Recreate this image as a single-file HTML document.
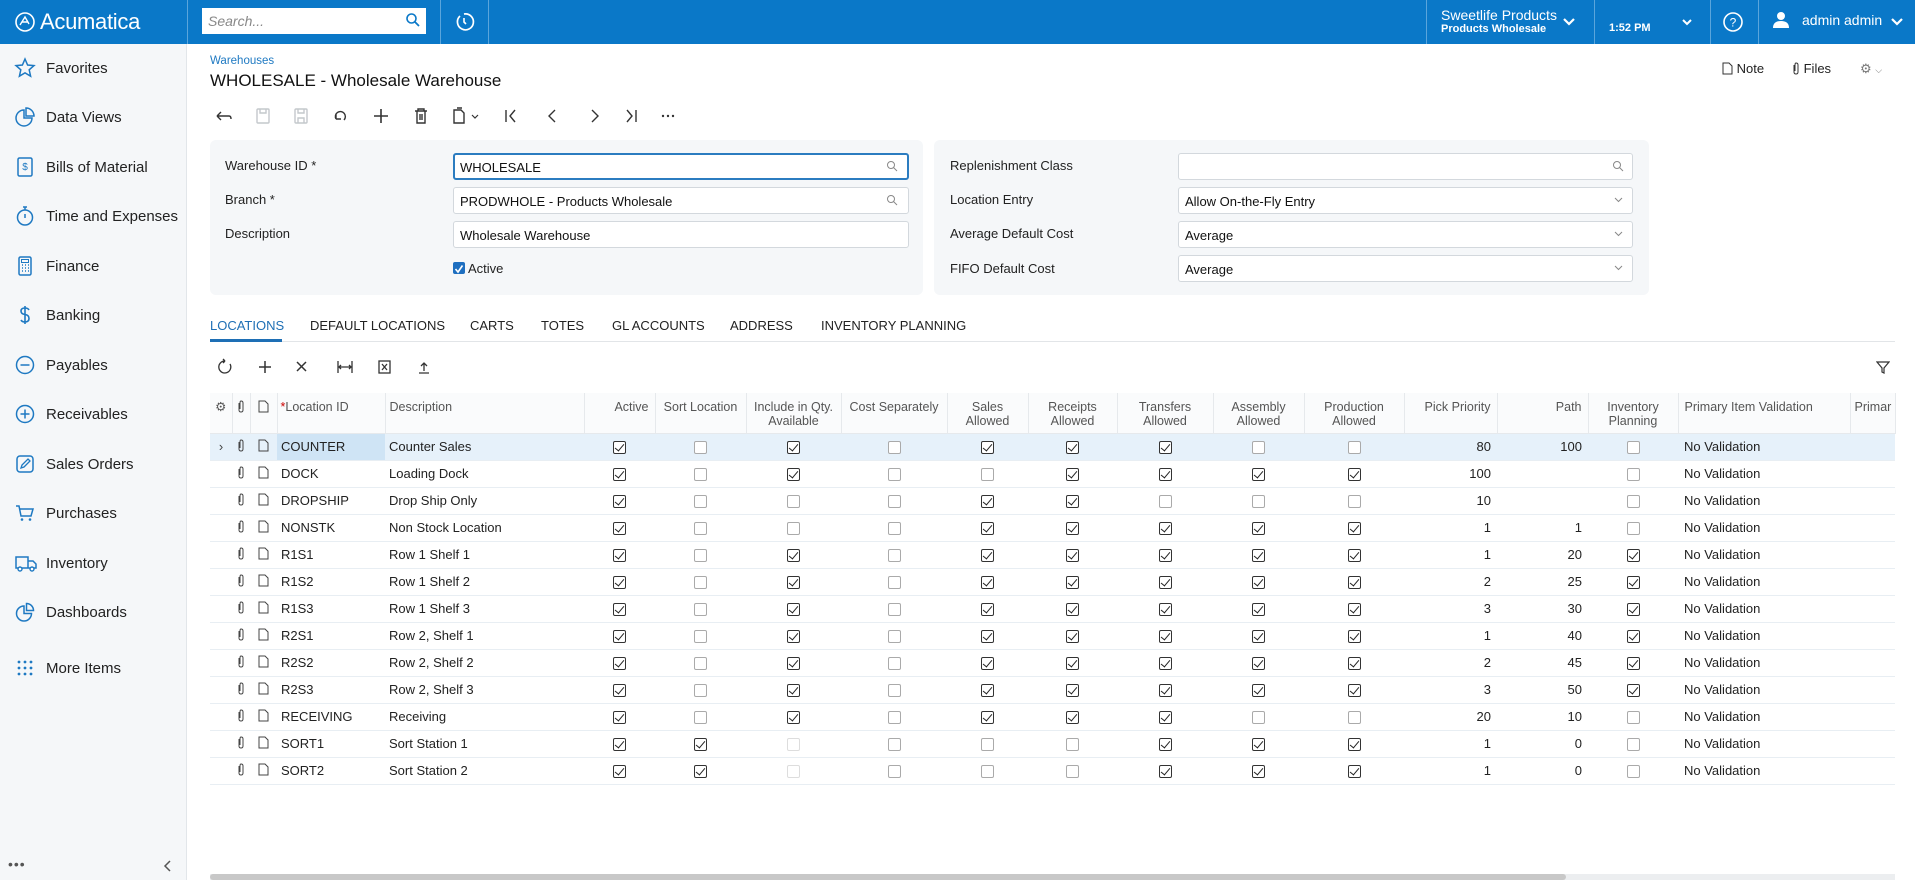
<!DOCTYPE html>
<html><head><meta charset="utf-8">
<style>
*{box-sizing:border-box;margin:0;padding:0}
body{width:1915px;height:880px;overflow:hidden;font-family:"Liberation Sans",Arial,sans-serif;background:#fff;position:relative;color:#222}
.abs{position:absolute}
#top{left:0;top:0;width:1915px;height:44px;background:#0a78c8;color:#fff}
.vd{position:absolute;top:0;width:1px;height:44px;background:#5aa5dc}
#side{left:0;top:44px;width:187px;height:836px;background:#f5f7f9;border-right:1px solid #e2e6ea}
.si{position:absolute;left:0;height:30px;width:187px;font-size:15px;color:#222;display:flex;align-items:center}
.si svg{position:absolute;left:14px}
.si span{position:absolute;left:46px}
.lbl{position:absolute;font-size:13px;color:#222}
.inp{position:absolute;height:27px;background:#fff;border:1px solid #d3d8dd;border-radius:3px;font-size:13px;padding:6px 6px;color:#111}
.panel{position:absolute;background:#f5f7f9;border-radius:6px}
.tab{position:absolute;top:318px;font-size:13px;color:#222}
table{border-collapse:collapse;position:absolute;left:210px;top:393px;table-layout:fixed;font-size:13px}
th{height:40px;font-weight:normal;color:#555;font-size:12.5px;border-right:1px solid #e6e9ec;border-bottom:1px solid #e6e9ec;background:#fafbfc;vertical-align:top;padding-top:7px;line-height:14px;overflow:hidden;white-space:nowrap}
td{height:27px;border-bottom:1px solid #e8eef3;padding:0 4px;white-space:nowrap;overflow:hidden}
tr.sel td{background:#e6f1fa}
tr.sel td.lid{background:#cfe4f5}
td.c{text-align:center}
td.r{text-align:right;padding-right:6px}
.k,.u,.d{display:inline-block;width:13px;height:13px;border:1px solid #333;border-radius:2px;vertical-align:middle;position:relative;background:#fff}
.k::after{content:"";position:absolute;left:3px;top:0px;width:4px;height:8px;border:solid #222;border-width:0 1.5px 1.5px 0;transform:rotate(40deg)}
.u{border-color:#aaa}
.d{border-color:#ddd}
.ic{color:#444;text-align:center;padding:0}
</style></head><body>

<div id="top" class="abs">
  <svg class="abs" style="left:14px;top:11px" width="22" height="22" viewBox="0 0 22 22"><circle cx="11" cy="11" r="9" fill="none" stroke="#fff" stroke-width="1.6"/><path d="M6 14 L11 6 L15 13 M8 11 h6" fill="none" stroke="#fff" stroke-width="1.4"/></svg>
  <div class="abs" style="left:40px;top:9px;font-size:22px;letter-spacing:-0.3px">Acumatica</div>
  <div class="vd" style="left:187px"></div>
  <div class="abs" style="left:202px;top:8px;width:224px;height:26px;background:#fff;"></div>
  <div class="abs" style="left:208px;top:13px;font-size:14px;color:#888;font-style:italic">Search...</div>
  <svg class="abs" style="left:405px;top:12px" width="16" height="16" viewBox="0 0 16 16"><circle cx="6.5" cy="6.5" r="4.5" fill="none" stroke="#0a78c8" stroke-width="1.6"/><path d="M10 10 L14 14" stroke="#0a78c8" stroke-width="1.8"/></svg>
  <div class="vd" style="left:440px"></div>
  <svg class="abs" style="left:453px;top:11px" width="22" height="22" viewBox="0 0 22 22"><path d="M7 5 A8 8 0 1 0 11 3" fill="none" stroke="#fff" stroke-width="1.7"/><path d="M11 7 V11 L13 13" fill="none" stroke="#fff" stroke-width="1.6"/></svg>
  <div class="vd" style="left:488px"></div>
  <div class="vd" style="left:1426px"></div>
  <div class="abs" style="left:1441px;top:7px;font-size:14px">Sweetlife Products</div>
  <div class="abs" style="left:1441px;top:23px;font-size:11px;font-weight:bold">Products Wholesale</div>
  <svg class="abs" style="left:1562px;top:17px" width="14" height="10" viewBox="0 0 14 10"><path d="M2 2 L7 7 L12 2" fill="none" stroke="#fff" stroke-width="2.2"/></svg>
  <div class="vd" style="left:1594px"></div>
  <div class="abs" style="left:1609px;top:22px;font-size:11px;font-weight:bold">1:52 PM</div>
  <svg class="abs" style="left:1681px;top:18px" width="12" height="9" viewBox="0 0 12 9"><path d="M2 2 L6 6 L10 2" fill="none" stroke="#fff" stroke-width="2"/></svg>
  <div class="vd" style="left:1710px"></div>
  <svg class="abs" style="left:1722px;top:11px" width="22" height="22" viewBox="0 0 22 22"><circle cx="11" cy="11" r="9" fill="none" stroke="#fff" stroke-width="1.6"/><text x="11" y="15.5" font-size="12" fill="#fff" text-anchor="middle" font-family="Liberation Sans">?</text></svg>
  <div class="vd" style="left:1758px"></div>
  <svg class="abs" style="left:1772px;top:11px" width="18" height="18" viewBox="0 0 18 18"><circle cx="9" cy="5" r="4" fill="#fff"/><path d="M1 17 Q1 10 9 10 Q17 10 17 17 Z" fill="#fff"/></svg>
  <div class="abs" style="left:1802px;top:12px;font-size:14px">admin admin</div>
  <svg class="abs" style="left:1890px;top:17px" width="14" height="10" viewBox="0 0 14 10"><path d="M2 2 L7 7 L12 2" fill="none" stroke="#fff" stroke-width="2.2"/></svg>
</div>

<div id="side" class="abs">
  <div class="si" style="top:9px"><svg width="22" height="22" viewBox="0 0 22 22"><path d="M11 2 L13.6 8 L20 8.6 L15.2 12.8 L16.6 19.2 L11 15.9 L5.4 19.2 L6.8 12.8 L2 8.6 L8.4 8 Z" fill="none" stroke="#1e79c2" stroke-width="1.5"/></svg><span>Favorites</span></div>
  <div class="si" style="top:58px"><svg width="22" height="22" viewBox="0 0 22 22"><path d="M10 4 A8 8 0 1 0 18 12 H10 Z" fill="none" stroke="#1e79c2" stroke-width="1.5"/><path d="M12 2 A8 8 0 0 1 20 10 H12 Z" fill="none" stroke="#1e79c2" stroke-width="1.5"/></svg><span>Data Views</span></div>
  <div class="si" style="top:108px"><svg width="22" height="22" viewBox="0 0 22 22"><rect x="4" y="2" width="14" height="18" rx="1.5" fill="none" stroke="#1e79c2" stroke-width="1.5"/><text x="11" y="14" font-size="10" fill="#1e79c2" text-anchor="middle" font-family="Liberation Sans">$</text></svg><span>Bills of Material</span></div>
  <div class="si" style="top:157px"><svg width="22" height="22" viewBox="0 0 22 22"><circle cx="11" cy="12.5" r="7.5" fill="none" stroke="#1e79c2" stroke-width="1.5"/><path d="M9 2 H13 M11 2 V5 M11 9 V13" stroke="#1e79c2" stroke-width="1.5"/></svg><span>Time and Expenses</span></div>
  <div class="si" style="top:207px"><svg width="22" height="22" viewBox="0 0 22 22"><rect x="5" y="2" width="12" height="18" rx="1.5" fill="none" stroke="#1e79c2" stroke-width="1.5"/><rect x="7.5" y="4.5" width="7" height="3" fill="none" stroke="#1e79c2"/><path d="M8 10h1M11 10h1M14 10h1M8 13h1M11 13h1M14 13h1M8 16h1M11 16h1M14 16h1" stroke="#1e79c2" stroke-width="1.5"/></svg><span>Finance</span></div>
  <div class="si" style="top:256px"><svg width="22" height="22" viewBox="0 0 22 22"><path d="M15 6 Q14 4 11 4 Q7 4 7 7 Q7 10 11 10.5 Q15 11 15 14.5 Q15 18 11 18 Q8 18 7 16 M11 2 V20" fill="none" stroke="#1e79c2" stroke-width="1.6"/></svg><span>Banking</span></div>
  <div class="si" style="top:306px"><svg width="22" height="22" viewBox="0 0 22 22"><circle cx="11" cy="11" r="8.5" fill="none" stroke="#1e79c2" stroke-width="1.5"/><path d="M6.5 11 H15.5" stroke="#1e79c2" stroke-width="1.5"/></svg><span>Payables</span></div>
  <div class="si" style="top:355px"><svg width="22" height="22" viewBox="0 0 22 22"><circle cx="11" cy="11" r="8.5" fill="none" stroke="#1e79c2" stroke-width="1.5"/><path d="M6.5 11 H15.5 M11 6.5 V15.5" stroke="#1e79c2" stroke-width="1.5"/></svg><span>Receivables</span></div>
  <div class="si" style="top:405px"><svg width="22" height="22" viewBox="0 0 22 22"><rect x="3" y="3" width="16" height="16" rx="3" fill="none" stroke="#1e79c2" stroke-width="1.5"/><path d="M7 15 L8 12 L14 6 L16 8 L10 14 Z" fill="none" stroke="#1e79c2" stroke-width="1.3"/></svg><span>Sales Orders</span></div>
  <div class="si" style="top:454px"><svg width="22" height="22" viewBox="0 0 22 22"><path d="M2 4 H5 L7 14 H17 L19 7 H6" fill="none" stroke="#1e79c2" stroke-width="1.5"/><circle cx="8" cy="17.5" r="1.3" fill="#1e79c2"/><circle cx="16" cy="17.5" r="1.3" fill="#1e79c2"/></svg><span>Purchases</span></div>
  <div class="si" style="top:504px"><svg width="24" height="22" viewBox="0 0 24 22"><path d="M2 5 H14 V16 H2 Z M14 9 H19 L22 12 V16 H14" fill="none" stroke="#1e79c2" stroke-width="1.5"/><circle cx="6" cy="17" r="2" fill="#fff" stroke="#1e79c2" stroke-width="1.4"/><circle cx="18" cy="17" r="2" fill="#fff" stroke="#1e79c2" stroke-width="1.4"/></svg><span>Inventory</span></div>
  <div class="si" style="top:553px"><svg width="22" height="22" viewBox="0 0 22 22"><path d="M10 5 A7.5 7.5 0 1 0 17.5 12.5 H10 Z" fill="none" stroke="#1e79c2" stroke-width="1.5"/><path d="M12.5 2.5 A7 7 0 0 1 19.5 9.5 H12.5 Z" fill="none" stroke="#1e79c2" stroke-width="1.5"/></svg><span>Dashboards</span></div>
  <div class="si" style="top:609px"><svg width="22" height="22" viewBox="0 0 22 22"><g fill="#1e79c2"><circle cx="5" cy="5" r="1.4"/><circle cx="11" cy="5" r="1.4"/><circle cx="17" cy="5" r="1.4"/><circle cx="5" cy="11" r="1.4"/><circle cx="11" cy="11" r="1.4"/><circle cx="17" cy="11" r="1.4"/><circle cx="5" cy="17" r="1.4"/><circle cx="11" cy="17" r="1.4"/><circle cx="17" cy="17" r="1.4"/></g></svg><span>More Items</span></div>
  <div class="abs" style="left:8px;top:812px;font-size:14px;color:#555;letter-spacing:1px">•••</div>
  <svg class="abs" style="left:163px;top:816px" width="10" height="12" viewBox="0 0 10 12"><path d="M7 1 L2 6 L7 11" fill="none" stroke="#555" stroke-width="1.5"/></svg>
</div>

<div class="abs" style="left:210px;top:55px;font-size:11.5px;color:#1e79c2">Warehouses</div>
<div class="abs" style="left:210px;top:71px;font-size:17px;color:#111">WHOLESALE - Wholesale Warehouse</div>

<div class="abs" style="left:1722px;top:61px;font-size:13px;color:#222">
<svg width="11" height="13" viewBox="0 0 11 13" style="vertical-align:-2px"><path d="M1 1 H7 L10 4 V12 H1 Z" fill="none" stroke="#333"/></svg> Note</div>
<div class="abs" style="left:1792px;top:61px;font-size:13px;color:#222">
<svg width="8" height="13" viewBox="0 0 8 13" style="vertical-align:-2px"><path d="M2 3 V10 Q2 12 4 12 Q6 12 6 10 V3 Q6 1 4 1 Q3 1 3 3 V9" fill="none" stroke="#333"/></svg> Files</div>
<div class="abs" style="left:1860px;top:61px;font-size:13px;color:#777">⚙ <span style="font-size:9px">⌵</span></div>

<!-- main toolbar -->
<svg class="abs" style="left:212px;top:105px" width="480" height="22" viewBox="0 0 480 22" fill="none" stroke="#333" stroke-width="1.4">
  <path d="M5 11 H17 Q19 11 19 14 M5 11 L9 7 M5 11 L9 15"/>
  <g stroke="#c4c8cc"><rect x="45" y="4" width="12" height="14" rx="1"/><path d="M48 4 V8 H54 V4"/></g>
  <g stroke="#c4c8cc"><rect x="83" y="4" width="12" height="14" rx="1"/><path d="M86 4 V8 H92 V4 M86 18 V13 H92 V18"/></g>
  <path d="M124 14 A5 5 0 1 1 132 15 M124 14 V9 M124 14 H129"/>
  <path d="M169 4 V18 M162 11 H176" stroke-width="1.6"/>
  <path d="M203 6 H215 M206 6 V4 H212 V6 M205 6 V18 H213 V6 M208 9 V15 M210 9 V15"/>
  <path d="M242 5 H249 L252 8 V18 H242 Z M245 3 H250"/><path d="M260 10 L263 13 L266 10" stroke-width="1.2"/>
  <path d="M294 5 V17 M303 5 L298 11 L303 17"/>
  <path d="M343 5 L337 11 L343 17"/>
  <path d="M380 5 L386 11 L380 17"/>
  <path d="M415 5 L420 11 L415 17 M424 5 V17"/>
  <g fill="#333" stroke="none"><circle cx="451" cy="11" r="1.2"/><circle cx="456" cy="11" r="1.2"/><circle cx="461" cy="11" r="1.2"/></g>
</svg>

<!-- form panels -->
<div class="panel" style="left:210px;top:140px;width:713px;height:155px"></div>
<div class="panel" style="left:934px;top:140px;width:715px;height:155px"></div>
<div class="lbl" style="left:225px;top:158px">Warehouse ID *</div>
<div class="lbl" style="left:225px;top:192px">Branch *</div>
<div class="lbl" style="left:225px;top:226px">Description</div>
<div class="inp" style="left:453px;top:153px;width:456px;border:2px solid #2b7cc0;padding:5px 5px">WHOLESALE</div>
<div class="inp" style="left:453px;top:187px;width:456px">PRODWHOLE - Products Wholesale</div>
<div class="inp" style="left:453px;top:221px;width:456px">Wholesale Warehouse</div>
<svg class="abs" style="left:886px;top:160px" width="12" height="12" viewBox="0 0 12 12"><circle cx="5" cy="5" r="3.5" fill="none" stroke="#888"/><path d="M7.5 7.5 L11 11" stroke="#888"/></svg>
<svg class="abs" style="left:886px;top:194px" width="12" height="12" viewBox="0 0 12 12"><circle cx="5" cy="5" r="3.5" fill="none" stroke="#888"/><path d="M7.5 7.5 L11 11" stroke="#888"/></svg>
<div class="abs" style="left:453px;top:262px;width:12px;height:12px;background:#1e6fc0;border-radius:2px"><svg width="12" height="12" viewBox="0 0 12 12"><path d="M2.5 6 L5 9 L9.5 2.5" fill="none" stroke="#fff" stroke-width="1.6"/></svg></div>
<div class="lbl" style="left:468px;top:261px">Active</div>

<div class="lbl" style="left:950px;top:158px">Replenishment Class</div>
<div class="lbl" style="left:950px;top:192px">Location Entry</div>
<div class="lbl" style="left:950px;top:226px">Average Default Cost</div>
<div class="lbl" style="left:950px;top:261px">FIFO Default Cost</div>
<div class="inp" style="left:1178px;top:153px;width:455px"></div>
<div class="inp" style="left:1178px;top:187px;width:455px">Allow On-the-Fly Entry</div>
<div class="inp" style="left:1178px;top:221px;width:455px">Average</div>
<div class="inp" style="left:1178px;top:255px;width:455px">Average</div>
<svg class="abs" style="left:1612px;top:160px" width="12" height="12" viewBox="0 0 12 12"><circle cx="5" cy="5" r="3.5" fill="none" stroke="#888"/><path d="M7.5 7.5 L11 11" stroke="#888"/></svg>
<svg class="abs" style="left:1614px;top:197px" width="9" height="6" viewBox="0 0 9 6"><path d="M1 1 L4.5 4.5 L8 1" fill="none" stroke="#888"/></svg>
<svg class="abs" style="left:1614px;top:231px" width="9" height="6" viewBox="0 0 9 6"><path d="M1 1 L4.5 4.5 L8 1" fill="none" stroke="#888"/></svg>
<svg class="abs" style="left:1614px;top:265px" width="9" height="6" viewBox="0 0 9 6"><path d="M1 1 L4.5 4.5 L8 1" fill="none" stroke="#888"/></svg>

<!-- tabs -->
<div class="abs" style="left:210px;top:341px;width:1685px;height:1px;background:#e2e5e8"></div>
<div class="abs" style="left:210px;top:339px;width:72px;height:3px;background:#1e6fb5"></div>
<div class="tab" style="left:210px;color:#1e6fb5">LOCATIONS</div>
<div class="tab" style="left:310px">DEFAULT LOCATIONS</div>
<div class="tab" style="left:470px">CARTS</div>
<div class="tab" style="left:541px">TOTES</div>
<div class="tab" style="left:612px">GL ACCOUNTS</div>
<div class="tab" style="left:730px">ADDRESS</div>
<div class="tab" style="left:821px">INVENTORY PLANNING</div>

<!-- grid toolbar -->
<svg class="abs" style="left:216px;top:358px" width="230" height="18" viewBox="0 0 230 18" fill="none" stroke="#333" stroke-width="1.3">
  <path d="M9 3 A6 6 0 1 0 14 6 M9 3 L7 1 M9 3 L7 5"/>
  <path d="M49 3 V15 M43 9 H55" stroke-width="1.5"/>
  <path d="M81 4 L90 13 M90 4 L81 13" stroke-width="1.5"/>
  <path d="M122 3 V15 M136 3 V15 M123 9 H135 M125 7 L123 9 L125 11 M133 7 L135 9 L133 11"/>
  <rect x="163" y="3" width="11" height="12"/><path d="M166 6 L171 12 M171 6 L166 12"/>
  <path d="M208 5 V13 M205 8 L208 5 L211 8 M203 15 H213"/>
</svg>
<svg class="abs" style="left:1876px;top:360px" width="14" height="14" viewBox="0 0 14 14"><path d="M1 2 H13 L8 8 V13 L6 12 V8 Z" fill="none" stroke="#333" stroke-width="1.2"/></svg>

<table>
<colgroup><col style="width:22px"><col style="width:18px"><col style="width:27px"><col style="width:108px"><col style="width:199px"><col style="width:71px"><col style="width:91px"><col style="width:95px"><col style="width:106px"><col style="width:81px"><col style="width:89px"><col style="width:96px"><col style="width:91px"><col style="width:100px"><col style="width:93px"><col style="width:91px"><col style="width:90px"><col style="width:172px"><col style="width:45px"></colgroup>
<tr><th>⚙</th><th><svg width="8" height="13" viewBox="0 0 8 13"><path d="M2 3 V10 Q2 12 4 12 Q6 12 6 10 V3 Q6 1 4 1 Q3 1 3 3 V9" fill="none" stroke="#444"/></svg></th><th><svg width="11" height="13" viewBox="0 0 11 13"><path d="M1 1 H7 L10 4 V12 H1 Z" fill="none" stroke="#444"/></svg></th><th style="text-align:left;padding-left:3px"><span style="color:#c00">*</span>Location ID</th><th style="text-align:left;padding-left:4px">Description</th><th style="text-align:right;padding-right:6px">Active</th><th>Sort Location</th><th>Include in Qty.<br>Available</th><th>Cost Separately</th><th>Sales<br>Allowed</th><th>Receipts<br>Allowed</th><th>Transfers<br>Allowed</th><th>Assembly<br>Allowed</th><th>Production<br>Allowed</th><th style="text-align:right;padding-right:6px">Pick Priority</th><th style="text-align:right;padding-right:6px">Path</th><th>Inventory<br>Planning</th><th style="text-align:left;padding-left:6px">Primary Item Validation</th><th style="text-align:left;padding-left:4px">Primar</th></tr>
<tr class="sel"><td class="ic">›</td><td class="ic"><svg width="8" height="13" viewBox="0 0 8 13"><path d="M2 3 V10 Q2 12 4 12 Q6 12 6 10 V3 Q6 1 4 1 Q3 1 3 3 V9" fill="none" stroke="#444"/></svg></td><td class="ic"><svg width="11" height="13" viewBox="0 0 11 13"><path d="M1 1 H7 L10 4 V12 H1 Z" fill="none" stroke="#444"/></svg></td><td class="lid">COUNTER</td><td>Counter Sales</td><td class="c"><i class="k"></i></td><td class="c"><i class="u"></i></td><td class="c"><i class="k"></i></td><td class="c"><i class="u"></i></td><td class="c"><i class="k"></i></td><td class="c"><i class="k"></i></td><td class="c"><i class="k"></i></td><td class="c"><i class="u"></i></td><td class="c"><i class="u"></i></td><td class="r">80</td><td class="r">100</td><td class="c"><i class="u"></i></td><td style="padding-left:6px">No Validation</td><td></td></tr>
<tr><td></td><td class="ic"><svg width="8" height="13" viewBox="0 0 8 13"><path d="M2 3 V10 Q2 12 4 12 Q6 12 6 10 V3 Q6 1 4 1 Q3 1 3 3 V9" fill="none" stroke="#444"/></svg></td><td class="ic"><svg width="11" height="13" viewBox="0 0 11 13"><path d="M1 1 H7 L10 4 V12 H1 Z" fill="none" stroke="#444"/></svg></td><td>DOCK</td><td>Loading Dock</td><td class="c"><i class="k"></i></td><td class="c"><i class="u"></i></td><td class="c"><i class="k"></i></td><td class="c"><i class="u"></i></td><td class="c"><i class="u"></i></td><td class="c"><i class="k"></i></td><td class="c"><i class="k"></i></td><td class="c"><i class="k"></i></td><td class="c"><i class="k"></i></td><td class="r">100</td><td class="r"></td><td class="c"><i class="u"></i></td><td style="padding-left:6px">No Validation</td><td></td></tr>
<tr><td></td><td class="ic"><svg width="8" height="13" viewBox="0 0 8 13"><path d="M2 3 V10 Q2 12 4 12 Q6 12 6 10 V3 Q6 1 4 1 Q3 1 3 3 V9" fill="none" stroke="#444"/></svg></td><td class="ic"><svg width="11" height="13" viewBox="0 0 11 13"><path d="M1 1 H7 L10 4 V12 H1 Z" fill="none" stroke="#444"/></svg></td><td>DROPSHIP</td><td>Drop Ship Only</td><td class="c"><i class="k"></i></td><td class="c"><i class="u"></i></td><td class="c"><i class="u"></i></td><td class="c"><i class="u"></i></td><td class="c"><i class="k"></i></td><td class="c"><i class="k"></i></td><td class="c"><i class="u"></i></td><td class="c"><i class="u"></i></td><td class="c"><i class="u"></i></td><td class="r">10</td><td class="r"></td><td class="c"><i class="u"></i></td><td style="padding-left:6px">No Validation</td><td></td></tr>
<tr><td></td><td class="ic"><svg width="8" height="13" viewBox="0 0 8 13"><path d="M2 3 V10 Q2 12 4 12 Q6 12 6 10 V3 Q6 1 4 1 Q3 1 3 3 V9" fill="none" stroke="#444"/></svg></td><td class="ic"><svg width="11" height="13" viewBox="0 0 11 13"><path d="M1 1 H7 L10 4 V12 H1 Z" fill="none" stroke="#444"/></svg></td><td>NONSTK</td><td>Non Stock Location</td><td class="c"><i class="k"></i></td><td class="c"><i class="u"></i></td><td class="c"><i class="u"></i></td><td class="c"><i class="u"></i></td><td class="c"><i class="k"></i></td><td class="c"><i class="k"></i></td><td class="c"><i class="k"></i></td><td class="c"><i class="k"></i></td><td class="c"><i class="k"></i></td><td class="r">1</td><td class="r">1</td><td class="c"><i class="u"></i></td><td style="padding-left:6px">No Validation</td><td></td></tr>
<tr><td></td><td class="ic"><svg width="8" height="13" viewBox="0 0 8 13"><path d="M2 3 V10 Q2 12 4 12 Q6 12 6 10 V3 Q6 1 4 1 Q3 1 3 3 V9" fill="none" stroke="#444"/></svg></td><td class="ic"><svg width="11" height="13" viewBox="0 0 11 13"><path d="M1 1 H7 L10 4 V12 H1 Z" fill="none" stroke="#444"/></svg></td><td>R1S1</td><td>Row 1 Shelf 1</td><td class="c"><i class="k"></i></td><td class="c"><i class="u"></i></td><td class="c"><i class="k"></i></td><td class="c"><i class="u"></i></td><td class="c"><i class="k"></i></td><td class="c"><i class="k"></i></td><td class="c"><i class="k"></i></td><td class="c"><i class="k"></i></td><td class="c"><i class="k"></i></td><td class="r">1</td><td class="r">20</td><td class="c"><i class="k"></i></td><td style="padding-left:6px">No Validation</td><td></td></tr>
<tr><td></td><td class="ic"><svg width="8" height="13" viewBox="0 0 8 13"><path d="M2 3 V10 Q2 12 4 12 Q6 12 6 10 V3 Q6 1 4 1 Q3 1 3 3 V9" fill="none" stroke="#444"/></svg></td><td class="ic"><svg width="11" height="13" viewBox="0 0 11 13"><path d="M1 1 H7 L10 4 V12 H1 Z" fill="none" stroke="#444"/></svg></td><td>R1S2</td><td>Row 1 Shelf 2</td><td class="c"><i class="k"></i></td><td class="c"><i class="u"></i></td><td class="c"><i class="k"></i></td><td class="c"><i class="u"></i></td><td class="c"><i class="k"></i></td><td class="c"><i class="k"></i></td><td class="c"><i class="k"></i></td><td class="c"><i class="k"></i></td><td class="c"><i class="k"></i></td><td class="r">2</td><td class="r">25</td><td class="c"><i class="k"></i></td><td style="padding-left:6px">No Validation</td><td></td></tr>
<tr><td></td><td class="ic"><svg width="8" height="13" viewBox="0 0 8 13"><path d="M2 3 V10 Q2 12 4 12 Q6 12 6 10 V3 Q6 1 4 1 Q3 1 3 3 V9" fill="none" stroke="#444"/></svg></td><td class="ic"><svg width="11" height="13" viewBox="0 0 11 13"><path d="M1 1 H7 L10 4 V12 H1 Z" fill="none" stroke="#444"/></svg></td><td>R1S3</td><td>Row 1 Shelf 3</td><td class="c"><i class="k"></i></td><td class="c"><i class="u"></i></td><td class="c"><i class="k"></i></td><td class="c"><i class="u"></i></td><td class="c"><i class="k"></i></td><td class="c"><i class="k"></i></td><td class="c"><i class="k"></i></td><td class="c"><i class="k"></i></td><td class="c"><i class="k"></i></td><td class="r">3</td><td class="r">30</td><td class="c"><i class="k"></i></td><td style="padding-left:6px">No Validation</td><td></td></tr>
<tr><td></td><td class="ic"><svg width="8" height="13" viewBox="0 0 8 13"><path d="M2 3 V10 Q2 12 4 12 Q6 12 6 10 V3 Q6 1 4 1 Q3 1 3 3 V9" fill="none" stroke="#444"/></svg></td><td class="ic"><svg width="11" height="13" viewBox="0 0 11 13"><path d="M1 1 H7 L10 4 V12 H1 Z" fill="none" stroke="#444"/></svg></td><td>R2S1</td><td>Row 2, Shelf 1</td><td class="c"><i class="k"></i></td><td class="c"><i class="u"></i></td><td class="c"><i class="k"></i></td><td class="c"><i class="u"></i></td><td class="c"><i class="k"></i></td><td class="c"><i class="k"></i></td><td class="c"><i class="k"></i></td><td class="c"><i class="k"></i></td><td class="c"><i class="k"></i></td><td class="r">1</td><td class="r">40</td><td class="c"><i class="k"></i></td><td style="padding-left:6px">No Validation</td><td></td></tr>
<tr><td></td><td class="ic"><svg width="8" height="13" viewBox="0 0 8 13"><path d="M2 3 V10 Q2 12 4 12 Q6 12 6 10 V3 Q6 1 4 1 Q3 1 3 3 V9" fill="none" stroke="#444"/></svg></td><td class="ic"><svg width="11" height="13" viewBox="0 0 11 13"><path d="M1 1 H7 L10 4 V12 H1 Z" fill="none" stroke="#444"/></svg></td><td>R2S2</td><td>Row 2, Shelf 2</td><td class="c"><i class="k"></i></td><td class="c"><i class="u"></i></td><td class="c"><i class="k"></i></td><td class="c"><i class="u"></i></td><td class="c"><i class="k"></i></td><td class="c"><i class="k"></i></td><td class="c"><i class="k"></i></td><td class="c"><i class="k"></i></td><td class="c"><i class="k"></i></td><td class="r">2</td><td class="r">45</td><td class="c"><i class="k"></i></td><td style="padding-left:6px">No Validation</td><td></td></tr>
<tr><td></td><td class="ic"><svg width="8" height="13" viewBox="0 0 8 13"><path d="M2 3 V10 Q2 12 4 12 Q6 12 6 10 V3 Q6 1 4 1 Q3 1 3 3 V9" fill="none" stroke="#444"/></svg></td><td class="ic"><svg width="11" height="13" viewBox="0 0 11 13"><path d="M1 1 H7 L10 4 V12 H1 Z" fill="none" stroke="#444"/></svg></td><td>R2S3</td><td>Row 2, Shelf 3</td><td class="c"><i class="k"></i></td><td class="c"><i class="u"></i></td><td class="c"><i class="k"></i></td><td class="c"><i class="u"></i></td><td class="c"><i class="k"></i></td><td class="c"><i class="k"></i></td><td class="c"><i class="k"></i></td><td class="c"><i class="k"></i></td><td class="c"><i class="k"></i></td><td class="r">3</td><td class="r">50</td><td class="c"><i class="k"></i></td><td style="padding-left:6px">No Validation</td><td></td></tr>
<tr><td></td><td class="ic"><svg width="8" height="13" viewBox="0 0 8 13"><path d="M2 3 V10 Q2 12 4 12 Q6 12 6 10 V3 Q6 1 4 1 Q3 1 3 3 V9" fill="none" stroke="#444"/></svg></td><td class="ic"><svg width="11" height="13" viewBox="0 0 11 13"><path d="M1 1 H7 L10 4 V12 H1 Z" fill="none" stroke="#444"/></svg></td><td>RECEIVING</td><td>Receiving</td><td class="c"><i class="k"></i></td><td class="c"><i class="u"></i></td><td class="c"><i class="k"></i></td><td class="c"><i class="u"></i></td><td class="c"><i class="k"></i></td><td class="c"><i class="k"></i></td><td class="c"><i class="k"></i></td><td class="c"><i class="u"></i></td><td class="c"><i class="u"></i></td><td class="r">20</td><td class="r">10</td><td class="c"><i class="u"></i></td><td style="padding-left:6px">No Validation</td><td></td></tr>
<tr><td></td><td class="ic"><svg width="8" height="13" viewBox="0 0 8 13"><path d="M2 3 V10 Q2 12 4 12 Q6 12 6 10 V3 Q6 1 4 1 Q3 1 3 3 V9" fill="none" stroke="#444"/></svg></td><td class="ic"><svg width="11" height="13" viewBox="0 0 11 13"><path d="M1 1 H7 L10 4 V12 H1 Z" fill="none" stroke="#444"/></svg></td><td>SORT1</td><td>Sort Station 1</td><td class="c"><i class="k"></i></td><td class="c"><i class="k"></i></td><td class="c"><i class="d"></i></td><td class="c"><i class="u"></i></td><td class="c"><i class="u"></i></td><td class="c"><i class="u"></i></td><td class="c"><i class="k"></i></td><td class="c"><i class="k"></i></td><td class="c"><i class="k"></i></td><td class="r">1</td><td class="r">0</td><td class="c"><i class="u"></i></td><td style="padding-left:6px">No Validation</td><td></td></tr>
<tr><td></td><td class="ic"><svg width="8" height="13" viewBox="0 0 8 13"><path d="M2 3 V10 Q2 12 4 12 Q6 12 6 10 V3 Q6 1 4 1 Q3 1 3 3 V9" fill="none" stroke="#444"/></svg></td><td class="ic"><svg width="11" height="13" viewBox="0 0 11 13"><path d="M1 1 H7 L10 4 V12 H1 Z" fill="none" stroke="#444"/></svg></td><td>SORT2</td><td>Sort Station 2</td><td class="c"><i class="k"></i></td><td class="c"><i class="k"></i></td><td class="c"><i class="d"></i></td><td class="c"><i class="u"></i></td><td class="c"><i class="u"></i></td><td class="c"><i class="u"></i></td><td class="c"><i class="k"></i></td><td class="c"><i class="k"></i></td><td class="c"><i class="k"></i></td><td class="r">1</td><td class="r">0</td><td class="c"><i class="u"></i></td><td style="padding-left:6px">No Validation</td><td></td></tr>
</table>

<div class="abs" style="left:210px;top:874px;width:1685px;height:6px;background:#eceef0"></div>
<div class="abs" style="left:210px;top:874px;width:1356px;height:6px;background:#c8c8c8;border-radius:3px"></div>
</body></html>
